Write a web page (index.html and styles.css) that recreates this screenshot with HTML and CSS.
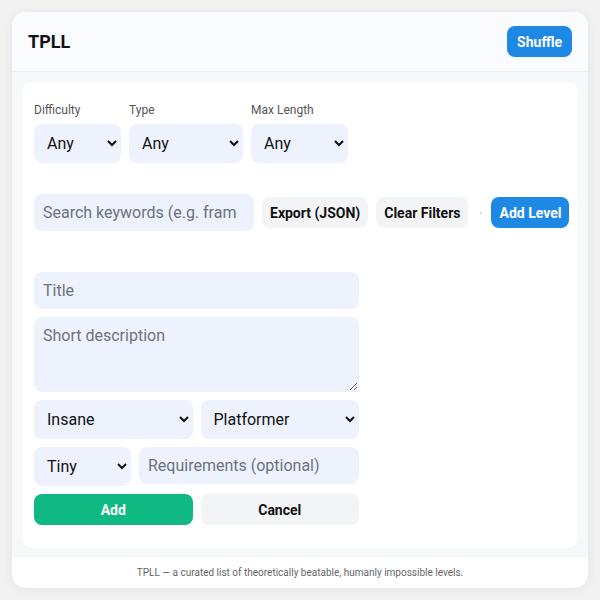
FILE: index.html
```html
<!DOCTYPE html>
<html lang="en">

<head>
    <meta charset="UTF-8">
    <meta name="viewport" content="width=device-width, initial-scale=1.0">
    <title>TPLL</title>
    <link rel="stylesheet" href="styles.css">
</head>

<body>
    <div class="app">
        <header class="topbar">
            <h1>TPLL</h1>
            <button class="btn btn-blue">Shuffle</button>
        </header>

        <main>
            <section class="panel">
                <!-- Filters -->
                <div class="filters">
                    <label class="field">
                        <span>Difficulty</span>
                        <select class="w-diff">
                            <option>Any</option>
                        </select>
                    </label>
                    <label class="field">
                        <span>Type</span>
                        <select class="w-type">
                            <option>Any</option>
                        </select>
                    </label>
                    <label class="field">
                        <span>Max Length</span>
                        <select class="w-len">
                            <option>Any</option>
                        </select>
                    </label>
                </div>

                <!-- Search + actions -->
                <div class="toolbar">
                    <input class="search" type="text" placeholder="Search keywords (e.g. frame-perfect, wave)">
                    <button class="btn btn-gray">Export (JSON)</button>
                    <button class="btn btn-gray">Clear Filters</button>
                    <span class="dot"></span>
                    <button class="btn btn-blue">Add Level</button>
                </div>

                <!-- Add level form -->
                <form class="level-form">
                    <input type="text" placeholder="Title">
                    <textarea placeholder="Short description"></textarea>
                    <div class="form-row">
                        <select>
                            <option>Insane</option>
                        </select>
                        <select>
                            <option>Platformer</option>
                        </select>
                    </div>
                    <div class="form-row">
                        <select class="w-len">
                            <option>Tiny</option>
                        </select>
                        <input class="grow" type="text" placeholder="Requirements (optional)">
                    </div>
                    <div class="form-row">
                        <button type="button" class="btn btn-green">Add</button>
                        <button type="button" class="btn btn-gray">Cancel</button>
                    </div>
                </form>
            </section>
        </main>

        <footer>TPLL — a curated list of theoretically beatable, humanly impossible levels.</footer>
    </div>
</body>

</html>
```

FILE: styles.css
```css
body {
    font-family: Roboto, "Liberation Sans", Arial, sans-serif;
    margin: 0;
    padding: 12px;
    background-color: #f2f2f3;
    color: #111;
}

.app {
    height: 576px;
    display: flex;
    flex-direction: column;
    background-color: #fff;
    border-radius: 14px;
    box-shadow: 0 2px 12px rgba(0, 0, 0, 0.06);
    overflow: hidden;
}

.topbar {
    display: flex;
    align-items: center;
    justify-content: space-between;
    padding: 14px 16px;
    background-color: #f9fbfe;
    border-bottom: 1px solid #eef0f3;
}

h1 {
    margin: 0;
    font-size: 18px;
    font-weight: 700;
}

main {
    flex: 1;
    padding: 10px 10px 8px;
    background-color: #f7f8fa;
}

.panel {
    background-color: #fff;
    border-radius: 10px;
    padding: 20px 12px 23px;
}

/* Buttons */
.btn {
    font-family: inherit;
    font-size: 14px;
    font-weight: 700;
    height: 31px;
    padding: 0 10px;
    border: none;
    border-radius: 8px;
    white-space: nowrap;
    flex-shrink: 0;
    cursor: pointer;
}

.btn-blue {
    background-color: #1e88e5;
    color: #fff;
}

.btn-gray {
    background-color: #f3f4f6;
    color: #111;
}

.btn-green {
    background-color: #10b981;
    color: #fff;
}

/* Inputs */
input,
select,
textarea {
    font-family: inherit;
    font-size: 16px;
    color: #111;
    background-color: #eef2fd;
    border: 1px solid transparent;
    border-radius: 8px;
    padding: 0 8px;
    box-sizing: border-box;
    outline: none;
}

input {
    height: 37px;
}

select {
    height: 39px;
}

::placeholder {
    color: #6b7280;
}

.filters {
    display: flex;
    gap: 8px;
}

.field {
    display: flex;
    flex-direction: column;
}

.field span {
    font-size: 12px;
    line-height: 16px;
    color: #555;
    margin-bottom: 6px;
}

.w-diff {
    width: 87px;
}

.w-type {
    width: 114px;
}

.w-len {
    width: 97px;
}

.toolbar {
    display: flex;
    align-items: center;
    gap: 8px;
    margin-top: 31px;
}

.toolbar .btn {
    padding: 0 8px;
}

.search {
    width: 220px;
    flex-shrink: 0;
    padding-right: 16px;
}

.dot {
    width: 2px;
    height: 2px;
    border-radius: 50%;
    background-color: #c8ccd2;
    margin: 0 1px 0 4px;
    flex-shrink: 0;
}

.level-form {
    width: 325px;
    display: flex;
    flex-direction: column;
    gap: 8px;
    margin-top: 41px;
}

textarea {
    height: 75px;
    padding: 8px;
    resize: vertical;
}

.form-row {
    display: flex;
    gap: 8px;
}

.form-row > select,
.form-row > .btn {
    flex: 1;
}

.form-row > .w-len {
    flex: none;
}

.grow {
    flex: 1;
    min-width: 0;
}

footer {
    height: 31px;
    line-height: 31px;
    text-align: center;
    font-size: 10px;
    color: #666;
    border-top: 1px solid #eef0f3;
}
```
